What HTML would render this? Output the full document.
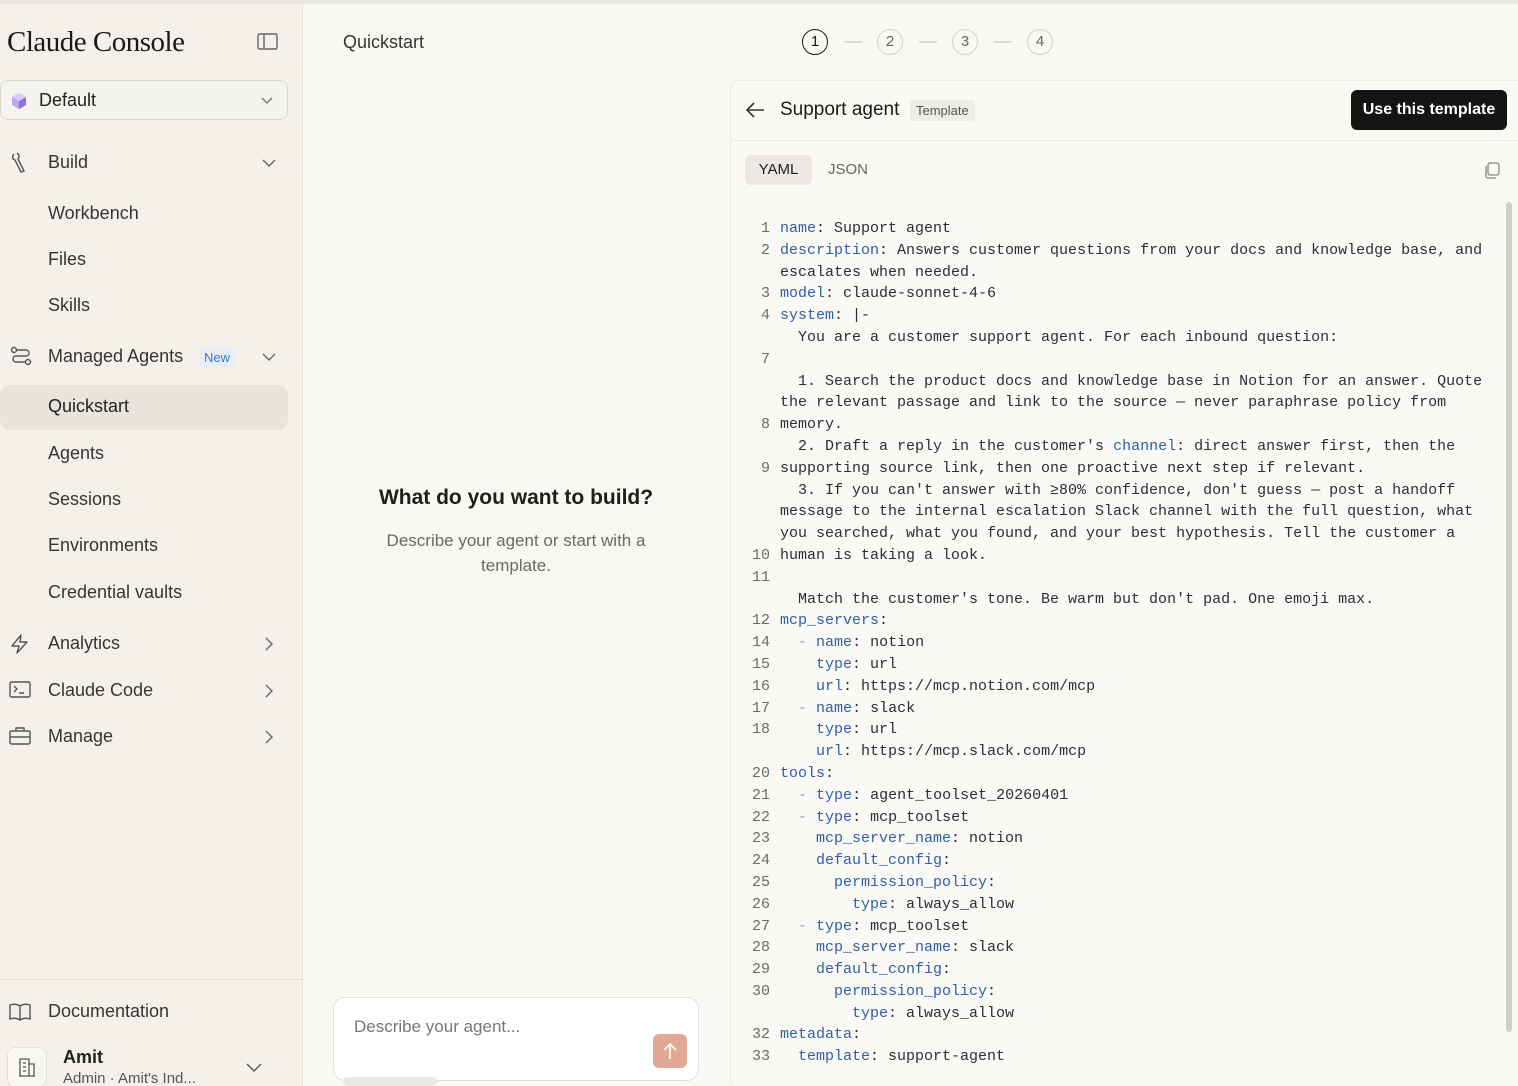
<!DOCTYPE html>
<html><head><meta charset="utf-8"><style>
*{margin:0;padding:0;box-sizing:border-box}
html,body{width:1518px;height:1086px;overflow:hidden}
body{background:#f9f8f4;font-family:"Liberation Sans",sans-serif;color:#2b2a27;position:relative}
.topline{position:absolute;left:0;top:0;width:1518px;height:4px;background:#e8e7e3}
.side{position:absolute;left:0;top:4px;width:303px;height:1082px;background:#f3f1ea;border-right:1px solid #e6e3da}
.logo{position:absolute;left:7px;top:22px;font-family:"Liberation Serif",serif;font-size:29px;color:#1b1a18;letter-spacing:-0.5px}
.ws{position:absolute;left:0;top:80px;width:288px;height:40px;border:1px solid #dcd9d0;border-radius:8px;background:#f6f4ee}
.ws span{position:absolute;left:38px;top:9px;font-size:18px;color:#222}
.item{position:absolute;left:48px;font-size:18px;color:#37352f}
.ic{position:absolute;left:9px}
.chev{position:absolute;left:262px}
.sel{position:absolute;left:0;top:385px;width:288px;height:45px;background:#e8e5dc;border-radius:10px}
.new{position:absolute;left:199px;top:348px;background:#e8eef6;color:#3a78d0;font-size:13px;padding:2px 5px;border-radius:3px}
.botline{position:absolute;left:0;top:979px;width:303px;height:1px;background:#e2dfd6}
.main-title{position:absolute;left:343px;top:32px;font-size:18px;color:#37352f}
.step{position:absolute;top:29px;width:26px;height:26px;border-radius:50%;border:1.5px solid #d6d3cb;font-size:15px;text-align:center;line-height:23px;color:#666}
.dash{position:absolute;top:41px;width:18px;height:1.5px;background:#dedbd3}
.q{position:absolute;left:330px;width:372px;text-align:center}
.card{position:absolute;left:730px;top:80px;width:800px;height:1010px;border:1px solid #ebe9e3;border-radius:10px;background:#faf9f6}
.hdr{position:absolute;left:730px;top:140px;width:788px;height:1px;background:#ebe9e3}
.btn{position:absolute;left:1351px;top:90px;width:156px;height:40px;background:#141413;color:#fff;border-radius:6px;font-size:16px;font-weight:bold;text-align:center;line-height:40px}
.code{position:absolute;left:745px;top:218px;font-family:"Liberation Mono",monospace;font-size:15px;color:#2d2d35}
.l{height:21.8px;line-height:21.8px;white-space:pre}
.n{display:inline-block;width:25px;text-align:right;margin-right:10px;color:#6b6b6b}
.k{color:#2f5fa6}
.d{color:#8aa3c8}
.input{position:absolute;left:333px;top:997px;width:366px;height:84px;background:#fff;border:1px solid #e3e1dc;border-radius:12px}
</style></head><body>
<div class="topline"></div>
<div class="side">
<div class="logo">Claude Console</div>
<svg style="position:absolute;left:257px;top:29px" width="22" height="18" viewBox="0 0 22 18"><rect x="1" y="1" width="19" height="15" rx="1.5" fill="none" stroke="#666" stroke-width="1.4"/><line x1="7" y1="1" x2="7" y2="16" stroke="#666" stroke-width="1.4"/></svg>
</div>
<div class="ws"><svg style="position:absolute;left:9px;top:11px" width="18" height="18" viewBox="0 0 18 18"><path d="M9 1 L16 5 L16 13 L9 17 L2 13 L2 5 Z" fill="#b9a8ee"/><path d="M9 9 L16 5 L16 13 L9 17Z" fill="#8c72e0"/><path d="M2 5 L9 1 L16 5 L9 9Z" fill="#d8cdf8"/></svg><span>Default</span>
<svg style="position:absolute;left:260px;top:16px" width="12" height="8"><path d="M1 1 L6 6 L11 1" fill="none" stroke="#777" stroke-width="1.4"/></svg></div>

<svg class="ic" style="top:152px" width="20" height="22" viewBox="0 0 20 22"><path d="M5 2 C3 4 3 7 6 8 L12 20 L15 19 L9 7 C11 5 10 2 8 1" fill="none" stroke="#555" stroke-width="1.4"/></svg>
<div class="item" style="top:152px">Build</div>
<svg class="chev" style="top:159px" width="14" height="9"><path d="M1 1 L7 7 L13 1" fill="none" stroke="#666" stroke-width="1.4"/></svg>
<div class="item" style="top:203px">Workbench</div>
<div class="item" style="top:249px">Files</div>
<div class="item" style="top:295px">Skills</div>
<svg class="ic" style="top:346px;left:10px" width="22" height="20" viewBox="0 0 22 20"><circle cx="4" cy="4" r="2.5" fill="none" stroke="#555" stroke-width="1.4"/><circle cx="18" cy="16" r="2.5" fill="none" stroke="#555" stroke-width="1.4"/><path d="M7 4 H16 C20 4 20 10 16 10 H6 C2 10 2 16 6 16 H15" fill="none" stroke="#555" stroke-width="1.4"/></svg>
<div class="item" style="top:346px">Managed Agents</div>
<div class="new">New</div>
<svg class="chev" style="top:353px" width="14" height="9"><path d="M1 1 L7 7 L13 1" fill="none" stroke="#666" stroke-width="1.4"/></svg>
<div class="sel"></div>
<div class="item" style="top:396px;color:#222">Quickstart</div>
<div class="item" style="top:443px">Agents</div>
<div class="item" style="top:489px">Sessions</div>
<div class="item" style="top:535px">Environments</div>
<div class="item" style="top:582px">Credential vaults</div>
<svg class="ic" style="top:633px" width="22" height="22" viewBox="0 0 22 22"><path d="M12 2 L3 13 H10 L8 20 L18 9 H11 Z" fill="none" stroke="#555" stroke-width="1.4" stroke-linejoin="round"/></svg>
<div class="item" style="top:633px">Analytics</div>
<svg class="chev" style="top:637px;left:265px" width="9" height="14"><path d="M1 1 L7 7 L1 13" fill="none" stroke="#666" stroke-width="1.4"/></svg>
<svg class="ic" style="top:681px" width="22" height="18" viewBox="0 0 22 18"><rect x="1" y="1" width="20" height="15" rx="1.5" fill="none" stroke="#555" stroke-width="1.4"/><path d="M5 5 L8 8 L5 11 M10 12 H15" fill="none" stroke="#555" stroke-width="1.4"/></svg>
<div class="item" style="top:680px">Claude Code</div>
<svg class="chev" style="top:684px;left:265px" width="9" height="14"><path d="M1 1 L7 7 L1 13" fill="none" stroke="#666" stroke-width="1.4"/></svg>
<svg class="ic" style="top:726px" width="22" height="20" viewBox="0 0 22 20"><rect x="1" y="5" width="20" height="13" rx="1.5" fill="none" stroke="#555" stroke-width="1.4"/><path d="M7 5 V2 H15 V5 M1 11 H21" fill="none" stroke="#555" stroke-width="1.4"/></svg>
<div class="item" style="top:726px">Manage</div>
<svg class="chev" style="top:730px;left:265px" width="9" height="14"><path d="M1 1 L7 7 L1 13" fill="none" stroke="#666" stroke-width="1.4"/></svg>
<div class="botline"></div>
<svg class="ic" style="top:1003px" width="22" height="18" viewBox="0 0 22 18"><path d="M11 3 C8 1 4 1 1 2 V16 C4 15 8 15 11 17 C14 15 18 15 21 16 V2 C18 1 14 1 11 3 Z M11 3 V17" fill="none" stroke="#555" stroke-width="1.4"/></svg>
<div class="item" style="top:1001px">Documentation</div>
<div style="position:absolute;left:7px;top:1047px;width:40px;height:40px;border:1px solid #e4e1d8;border-radius:8px;background:#f8f7f2"></div>
<svg style="position:absolute;left:18px;top:1057px" width="18" height="20" viewBox="0 0 18 20"><path d="M2 19 V2 H11 V19 M11 7 H16 V19 M1 19 H17 M5 6 H8 M5 10 H8 M5 14 H8" fill="none" stroke="#555" stroke-width="1.3"/></svg>
<div class="item" style="top:1047px;left:63px;font-weight:bold;color:#222">Amit</div>
<div class="item" style="top:1070px;left:63px;font-size:15px;color:#555">Admin · Amit's Ind...</div>
<svg style="position:absolute;left:246px;top:1063px" width="16" height="10"><path d="M1 1 L8 8 L15 1" fill="none" stroke="#555" stroke-width="1.4"/></svg>

<div class="main-title">Quickstart</div>
<div class="step" style="left:802px;border-color:#1a1a1a;color:#1a1a1a">1</div>
<div class="dash" style="left:844px"></div>
<div class="step" style="left:877px">2</div>
<div class="dash" style="left:919px"></div>
<div class="step" style="left:952px">3</div>
<div class="dash" style="left:994px"></div>
<div class="step" style="left:1027px">4</div>

<div class="q" style="top:486px;font-size:21px;font-weight:bold;color:#1f1e1c">What do you want to build?</div>
<div class="q" style="top:528px;font-size:17px;line-height:25px;color:#6b6a66">Describe your agent or start with a<br>template.</div>

<div class="input"><div style="position:absolute;left:20px;top:19px;font-size:17px;color:#777">Describe your agent...</div>
<div style="position:absolute;left:319px;top:36px;width:34px;height:34px;border-radius:6px;background:#e3a894"><svg width="34" height="34"><path d="M17 25 V10 M11 16 L17 10 L23 16" fill="none" stroke="#fff" stroke-width="1.6"/></svg></div></div>
<div style="position:absolute;left:343px;top:1077px;width:94px;height:9px;background:#ebe9e4;border-radius:4px"></div>

<div class="card"></div>
<div class="hdr"></div>
<svg style="position:absolute;left:744px;top:101px" width="22" height="18"><path d="M20 9 H3 M10 2 L3 9 L10 16" fill="none" stroke="#333" stroke-width="1.6"/></svg>
<div style="position:absolute;left:780px;top:99px;font-size:19px;color:#1c1b19">Support agent</div>
<div style="position:absolute;left:910px;top:100px;background:#efede7;padding:3px 6px;border-radius:4px;font-size:13px;color:#555">Template</div>
<div class="btn">Use this template</div>
<div style="position:absolute;left:745px;top:155px;width:67px;height:30px;background:#ebe9e2;border-radius:6px;font-size:15px;text-align:center;line-height:30px;color:#1f1f1f">YAML</div>
<div style="position:absolute;left:828px;top:161px;font-size:15px;color:#666">JSON</div>
<svg style="position:absolute;left:1484px;top:162px" width="16" height="17"><rect x="4" y="1" width="11" height="12" rx="2" fill="none" stroke="#888" stroke-width="1.3"/><path d="M2 4 V14 C2 15 3 16 4 16 H12" fill="none" stroke="#888" stroke-width="1.3"/></svg>
<div style="position:absolute;left:1506px;top:202px;width:6px;height:830px;background:#d0cec8;border-radius:3px"></div>

<div class="code"><div class="l"><span class="n">1</span><span class="k">name</span>: Support agent</div><div class="l"><span class="n">2</span><span class="k">description</span>: Answers customer questions from your docs and knowledge base, and</div><div class="l"><span class="n"></span>escalates when needed.</div><div class="l"><span class="n">3</span><span class="k">model</span>: claude-sonnet-4-6</div><div class="l"><span class="n">4</span><span class="k">system</span>: |-</div><div class="l"><span class="n"></span>  You are a customer support agent. For each inbound question:</div><div class="l"><span class="n">7</span></div><div class="l"><span class="n"></span>  1. Search the product docs and knowledge base in Notion for an answer. Quote</div><div class="l"><span class="n"></span>the relevant passage and link to the source — never paraphrase policy from</div><div class="l"><span class="n">8</span>memory.</div><div class="l"><span class="n"></span>  2. Draft a reply in the customer's <span class="k">channel</span>: direct answer first, then the</div><div class="l"><span class="n">9</span>supporting source link, then one proactive next step if relevant.</div><div class="l"><span class="n"></span>  3. If you can't answer with ≥80% confidence, don't guess — post a handoff</div><div class="l"><span class="n"></span>message to the internal escalation Slack channel with the full question, what</div><div class="l"><span class="n"></span>you searched, what you found, and your best hypothesis. Tell the customer a</div><div class="l"><span class="n">10</span>human is taking a look.</div><div class="l"><span class="n">11</span></div><div class="l"><span class="n"></span>  Match the customer's tone. Be warm but don't pad. One emoji max.</div><div class="l"><span class="n">12</span><span class="k">mcp_servers</span>:</div><div class="l"><span class="n">14</span>  <span class="d">-</span> <span class="k">name</span>: notion</div><div class="l"><span class="n">15</span>    <span class="k">type</span>: url</div><div class="l"><span class="n">16</span>    <span class="k">url</span>: https://mcp.notion.com/mcp</div><div class="l"><span class="n">17</span>  <span class="d">-</span> <span class="k">name</span>: slack</div><div class="l"><span class="n">18</span>    <span class="k">type</span>: url</div><div class="l"><span class="n"></span>    <span class="k">url</span>: https://mcp.slack.com/mcp</div><div class="l"><span class="n">20</span><span class="k">tools</span>:</div><div class="l"><span class="n">21</span>  <span class="d">-</span> <span class="k">type</span>: agent_toolset_20260401</div><div class="l"><span class="n">22</span>  <span class="d">-</span> <span class="k">type</span>: mcp_toolset</div><div class="l"><span class="n">23</span>    <span class="k">mcp_server_name</span>: notion</div><div class="l"><span class="n">24</span>    <span class="k">default_config</span>:</div><div class="l"><span class="n">25</span>      <span class="k">permission_policy</span>:</div><div class="l"><span class="n">26</span>        <span class="k">type</span>: always_allow</div><div class="l"><span class="n">27</span>  <span class="d">-</span> <span class="k">type</span>: mcp_toolset</div><div class="l"><span class="n">28</span>    <span class="k">mcp_server_name</span>: slack</div><div class="l"><span class="n">29</span>    <span class="k">default_config</span>:</div><div class="l"><span class="n">30</span>      <span class="k">permission_policy</span>:</div><div class="l"><span class="n"></span>        <span class="k">type</span>: always_allow</div><div class="l"><span class="n">32</span><span class="k">metadata</span>:</div><div class="l"><span class="n">33</span>  <span class="k">template</span>: support-agent</div></div>
</body></html>
